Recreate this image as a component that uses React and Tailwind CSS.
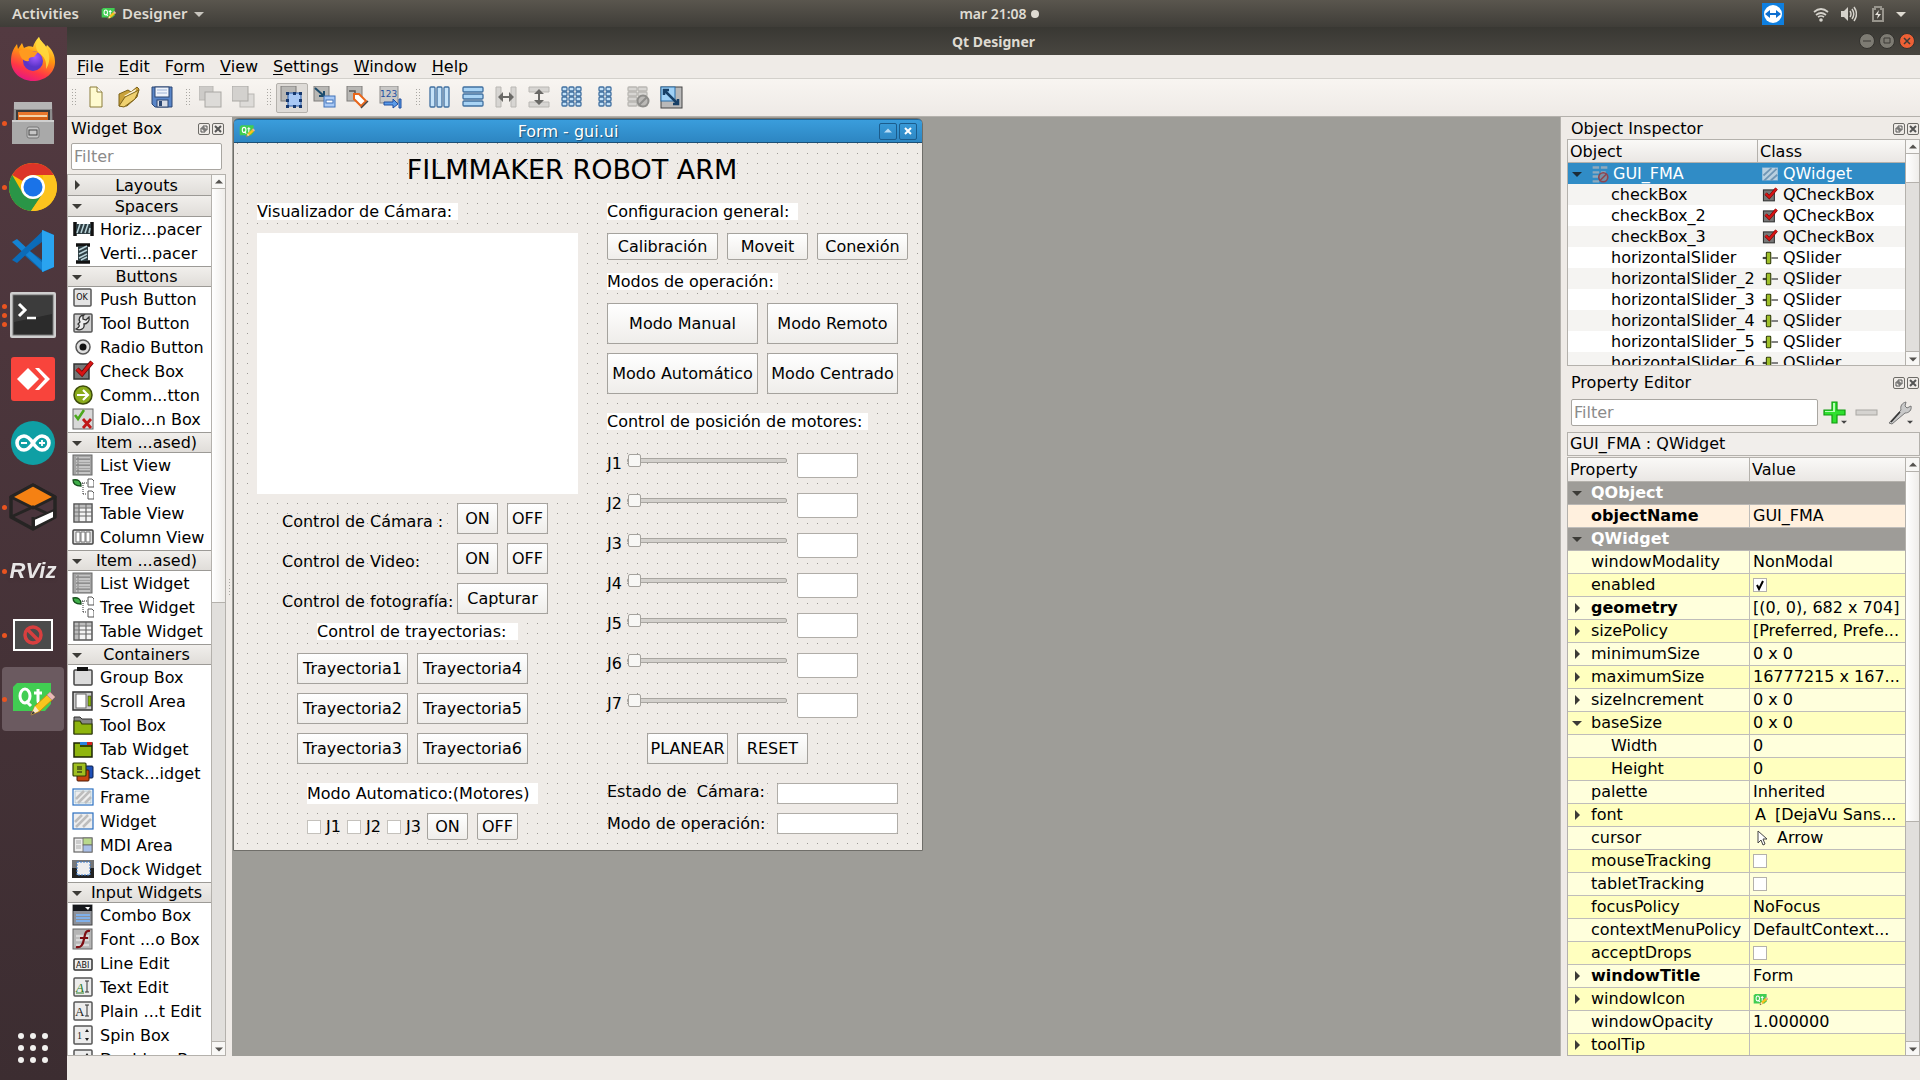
import React from "react";

const UI = 'font-["DejaVu_Sans",sans-serif]';
const SHELL = 'font-["Noto_Sans",sans-serif]';

/* ---------- small drawing helpers ---------- */

function Svg({ s = 22, box = 22, className = "", children }) {
  return (
    <svg width={s} height={s} viewBox={`0 0 ${box} ${box}`} className={`shrink-0 ${className}`} aria-hidden="true">
      {children}
    </svg>
  );
}

function Triangle({ dir = "down", color = "#3c3b37" }) {
  const d = { down: "M0 3h10L5 8z", up: "M0 7h10L5 2z", right: "M3 0v10l5-5z" }[dir];
  return (
    <svg width="10" height="10" viewBox="0 0 10 10" className="shrink-0" aria-hidden="true">
      <path d={d} fill={color} />
    </svg>
  );
}

function QtLogo({ s = 14 }) {
  return (
    <svg width={s} height={s} viewBox="0 0 44 44" className="shrink-0" aria-hidden="true">
      <path d="M6 6h34v21l-6 7H2V10z" fill="#41cd52" />
      <ellipse cx="14" cy="19" rx="5" ry="7" fill="none" stroke="#fff" strokeWidth="3" />
      <path d="M15 24l5 5M27 12v12q0 3 4 2.500M23 16h8" fill="none" stroke="#fff" strokeWidth="3" />
      <path d="M20 38l4-9 14-13 5 5-14 13z" fill="#f9c51d" stroke="#c98d0b" strokeWidth="1" />
      <path d="M36 18l5 5 3-3-5-5z" fill="#e9b7b7" stroke="#b98" />
      <path d="M20 38l4-9 4 5z" fill="#fbe9c9" />
      <path d="M20 38l2-4 2 2z" fill="#333" />
    </svg>
  );
}

/* ---------- dock ---------- */

const Firefox = () => (
  <Svg s={46} box={46}>
    <defs>
      <linearGradient id="ff" x1="0.7" y1="0" x2="0.3" y2="1">
        <stop offset="0" stopColor="#fff44f" />
        <stop offset="0.4" stopColor="#ff980e" />
        <stop offset="0.75" stopColor="#ff3647" />
        <stop offset="1" stopColor="#e31587" />
      </linearGradient>
      <radialGradient id="ffp" cx="0.6" cy="0.3">
        <stop offset="0" stopColor="#a45bff" />
        <stop offset="1" stopColor="#5a35c9" />
      </radialGradient>
    </defs>
    <path d="M29 1c1 4 5 6 7 10l1-2c6 5 8 11 8 17 0 11-10 19-22 19S1 36 1 25c0-7 2-12 6-17l1 5 4-6 2 5c3-2 7-2 9-1 1-4 3-7 6-10z" fill="url(#ff)" />
    <circle cx="23" cy="25" r="10" fill="url(#ffp)" />
    <path d="M9 15c5-3 10-2 13 0l6 1-4 5c-4 0-6 1-5 4-5 1-9-3-10-10z" fill="#ff9a1f" />
    <path d="M29 1c1 4 5 6 7 10 5 8 4 16 0 22 1-8-2-13-7-16-4-4-4-10 0-16z" fill="#ffd83d" opacity="0.9" />
  </Svg>
);
const Files = () => (
  <Svg s={44} box={44}>
    <path d="M3 1h38l1 42H2z" fill="#8d8d8d" />
    <path d="M3 1h38v7H3z" fill="#b5b5b5" />
    <path d="M5 9h34v12H5z" fill="#3a3a3a" />
    <path d="M7 11h30v6H7z" fill="#e9762b" />
    <path d="M8 14h28v5H8z" fill="#f5d3a8" />
    <path d="M7 16h30v4H7z" fill="#d35f16" />
    <path d="M1 19h42v24H1z" fill="#a9a9a9" />
    <path d="M1 19h42v2H1z" fill="#cfcfcf" />
    <rect x="16" y="26" width="12" height="11" rx="2" fill="#c6c6c6" stroke="#777" />
    <rect x="18" y="29" width="8" height="5" fill="none" stroke="#444" />
  </Svg>
);
const Chrome = () => (
  <Svg s={48} box={48}>
    <circle cx="24" cy="24" r="24" fill="#fbbc05" />
    <path d="M24 0A24 24 0 0 1 44.800 12H24A12 12 0 0 0 13.600 18L3.200 12A24 24 0 0 1 24 0z" fill="#dc3428" />
    <path d="M3.200 12A24 24 0 0 0 22 48L34 30A12 12 0 0 1 13.600 30z" fill="#2a9547" />
    <path d="M34 12h10.800A24 24 0 0 1 22 48l12.400-18z" fill="#fcc31e" />
    <circle cx="24" cy="24" r="12" fill="#fff" />
    <circle cx="24" cy="24" r="9.500" fill="#1a73e8" />
  </Svg>
);
const VSCode = () => (
  <Svg s={44} box={44}>
    <path d="M32 1l11 5v32l-11 5-19-17z" fill="#0d68b0" />
    <path d="M1 13l5-3 27 25v8z" fill="#1483d3" />
    <path d="M1 31l5 3 27-25V1z" fill="#0b6bb8" />
    <path d="M31 1l12 5v32l-12 5z" fill="#2aa4f0" />
    <path d="M31 13v18L19 22z" fill="#4b353c" />
  </Svg>
);
const Terminal = () => (
  <Svg s={46} box={46}>
    <rect x="0" y="0" width="46" height="46" rx="2" fill="#cfcfcf" />
    <rect x="3" y="3" width="40" height="40" fill="#2b2b2b" stroke="#777" />
    <path d="M4 4h38v18L4 30z" fill="#444" opacity="0.7" />
    <path d="M9 12l6 6-6 6" stroke="#fff" strokeWidth="3" fill="none" />
    <path d="M17 26h9" stroke="#fff" strokeWidth="2.500" />
  </Svg>
);
const AnyDesk = () => (
  <Svg s={44} box={44}>
    <rect width="44" height="44" rx="3" fill="#f8443c" />
    <path d="M17 11l11 11-11 11L6 22z" fill="#fff" />
    <path d="M24 11h4l11 11-11 11h-4l10-11z" fill="#fff" />
  </Svg>
);
const Arduino = () => (
  <Svg s={44} box={44}>
    <circle cx="22" cy="22" r="22" fill="#0f9fa4" />
    <path d="M22 22c-4-6-7-7-9-7a7 7 0 0 0 0 14c3 0 5-1 9-7s6-7 9-7a7 7 0 0 1 0 14c-3 0-5-1-9-7z" fill="none" stroke="#fff" strokeWidth="3.600" />
    <path d="M10 22h6M28 22h6M31 19v6" stroke="#fff" strokeWidth="1.800" />
  </Svg>
);
const Gazebo = () => (
  <Svg s={48} box={48}>
    <path d="M24 2l22 12v20L24 46 2 34V14z" fill="#4a353c" stroke="#262423" strokeWidth="3.500" strokeLinejoin="round" />
    <path d="M24 2l22 12-22 11L2 14z" fill="#f58113" stroke="#262423" strokeWidth="3" strokeLinejoin="round" />
    <path d="M2 34l22-10 22 10M24 34v12" fill="none" stroke="#262423" strokeWidth="3" />
    <path d="M25 36l20-9v8L25 45z" fill="#fff" stroke="#262423" strokeWidth="2" />
  </Svg>
);
const Blocked = () => (
  <Svg s={42} box={42}>
    <rect x="1" y="5" width="40" height="32" fill="#fff" />
    <rect x="3" y="7" width="36" height="28" fill="#4b4b4b" />
    <circle cx="21" cy="21" r="8" fill="none" stroke="#d83f3f" strokeWidth="3.500" />
    <path d="M15 15l12 12" stroke="#d83f3f" strokeWidth="3.500" />
  </Svg>
);
const RViz = () => (
  <span className='text-[22px] font-bold italic leading-none text-[#e8e6e6] drop-shadow font-["Liberation_Sans",sans-serif]'>RViz</span>
);

const DOCK = [
  ["Firefox", Firefox, 0],
  ["Files", Files, 1],
  ["Chrome", Chrome, 1],
  ["Visual Studio Code", VSCode, 0],
  ["Terminal", Terminal, 3],
  ["AnyDesk", AnyDesk, 0],
  ["Arduino", Arduino, 0],
  ["Gazebo", Gazebo, 1],
  ["RViz", RViz, 1],
  ["Unknown window", Blocked, 1],
  ["Qt Designer", () => <QtLogo s={44} />, 1],
];

function Dock() {
  return (
    <nav className="flex w-[67px] shrink-0 flex-col bg-linear-to-b from-[#533a41] to-[#3c2d31]" aria-label="Dock">
      {DOCK.map(([name, Icon, dots], i) => (
        <button
          key={name}
          aria-label={name}
          className={`relative mx-[2px] flex h-16 w-[62px] items-center justify-center rounded ${i === 10 ? "bg-[#6b5a60]" : ""}`}
        >
          <span className="absolute left-0 flex flex-col gap-1">
            {Array.from({ length: dots }, (_, k) => (
              <span key={k} className="size-[5px] rounded-full bg-[#e95420]" />
            ))}
          </span>
          <Icon />
        </button>
      ))}
      <button aria-label="Show applications" className="mt-auto mr-[2px] mb-4 flex justify-center">
        <Svg s={32} box={32}>
          {[4, 16, 28].map((y) => [4, 16, 28].map((x) => <circle key={`${x}-${y}`} cx={x} cy={y} r="3" fill="#f2f1ef" />))}
        </Svg>
      </button>
    </nav>
  );
}

/* ---------- shell bars ---------- */

function TopBar() {
  return (
    <header className={`grid h-[27px] shrink-0 grid-cols-[1fr_auto_1fr] items-center bg-linear-to-b from-[#5a564e] to-[#3f3d38] pr-[14px] pl-3 text-[14px] font-semibold text-[#dfdbd2] ${SHELL}`}>
      <div className="flex items-center text-[15px]">
        <button>Activities</button>
        <button className="ml-[22px] flex items-center gap-[6px]">
          <QtLogo s={15} />
          Designer
          <Triangle color="#c8c5be" />
        </button>
      </div>
      <div className="ml-20 flex items-center gap-1">
        mar 21:08
        <span className="size-2 rounded-full bg-[#dfdbd2]" />
      </div>
      <div className="flex items-center justify-end">
        <Svg s={22}>
          <rect width="22" height="22" fill="#0e7fe0" />
          <circle cx="11" cy="11" r="9" fill="#fff" />
          <path d="M3 11l5-4v3h6V7l5 4-5 4v-3H8v3z" fill="#0e6fd0" />
        </Svg>
        <Svg s={16} box={16} className="ml-[29px]">
          <path d="M1 6q7-6 14 0M3 9q5-4 10 0M5 11q3-2 6 0" fill="none" stroke="#d5d2cb" strokeWidth="1.700" />
          <circle cx="8" cy="14" r="1.800" fill="#d5d2cb" />
        </Svg>
        <Svg s={16} box={16} className="ml-3">
          <path d="M0 5h3l4-4v14l-4-4H0z" fill="#d5d2cb" />
          <path d="M9 5q2 3 0 6M11 3q3.500 5 0 10M13 1q5 7 0 14" fill="none" stroke="#d5d2cb" strokeWidth="1.500" />
        </Svg>
        <Svg s={18} box={18} className="ml-3">
          <path d="M4 4h2V2h6v2h2v12H4z" fill="none" stroke="#98958d" strokeWidth="2" />
          <path d="M10 5l-4 5h3l-1 4 4-5H9z" fill="#e5e2db" />
        </Svg>
        <span className="ml-[9px] flex"><Triangle color="#dfdbd2" /></span>
      </div>
    </header>
  );
}

function TitleBar() {
  const base = "flex size-4 items-center justify-center rounded-full border border-[#33322e]";
  return (
    <div className={`grid h-7 shrink-0 grid-cols-[1fr_auto_1fr] items-center bg-linear-to-b from-[#393833] to-[#484640] text-[14px] font-bold text-[#dfdbd2] ${SHELL}`}>
      <span />
      <h1>Qt Designer</h1>
      <div className="flex justify-end gap-1 pr-[5px]">
        <button aria-label="Minimize" className={`${base} bg-[#7d7b73]`}>
          <Svg s={8} box={8}><path d="M0 4h8" stroke="#3c3b37" /></Svg>
        </button>
        <button aria-label="Maximize" className={`${base} bg-[#7d7b73]`}>
          <Svg s={8} box={8}><path d="M1 1h6v5H1z" fill="none" stroke="#3c3b37" /></Svg>
        </button>
        <button aria-label="Close" className={`${base} bg-[#ee6035]`}>
          <Svg s={8} box={8}><path d="M1 1l6 6M7 1L1 7" stroke="#3c3b37" strokeWidth="1.500" /></Svg>
        </button>
      </div>
    </div>
  );
}

function MenuBar() {
  return (
    <nav className="flex h-6 shrink-0 items-center gap-px border-b border-[#d3d0cb] bg-[#efebe7] pl-[3px]" aria-label="Menu">
      {["File", "Edit", "Form", "View", "Settings", "Window", "Help"].map((m) => {
        const at = m === "Form" ? 1 : 0;
        return (
          <button key={m} className="px-[7px]">
            {m.slice(0, at)}
            <span className="underline underline-offset-2">{m[at]}</span>
            {m.slice(at + 1)}
          </button>
        );
      })}
    </nav>
  );
}

/* ---------- toolbar ---------- */

const gray = "#b9b7b3";
const Plate = () => <rect x="1" y="0" width="15" height="15" fill="#b8b7b4" stroke="#7e7d7a" />;
const cells = (cols, rows, w, h, x0, gx, gy, fill, stroke) =>
  Array.from({ length: cols * rows }, (_, i) => (
    <rect key={i} x={x0 + (i % cols) * gx} y={1 + Math.floor(i / cols) * gy} width={w} height={h} rx="1" fill={fill} stroke={stroke} strokeWidth="1.300" />
  ));

const TOOLS = [
  [
    ["New", <><path d="M5 1h7l5 5v15H5z" fill="#fffbd0" stroke="#8b7d3a" /><path d="M12 1v5h5" fill="#fff" stroke="#8b7d3a" /></>],
    ["Open", <><path d="M1 20V8l9-4 3 2 6-5 2 2-2 8-10 9z" fill="#c9a23b" stroke="#7d6219" /><path d="M6 10l12-7-2 9z" fill="#fff8dd" /><path d="M1 20l6-9 14-7-4 9-11 8z" fill="#efd170" stroke="#7d6219" /></>],
    ["Save", <><path d="M1 1h20v20H4l-3-3z" fill="#5a86c8" stroke="#2c4773" /><rect x="4" y="1" width="14" height="10" fill="#eef3fb" stroke="#2c4773" /><path d="M6 4h10M6 7h10" stroke="#9fb4d6" /><rect x="6" y="14" width="11" height="7" fill="#d9dde6" stroke="#2c4773" /><rect x="8" y="15" width="3" height="5" fill="#2c4773" /></>],
  ],
  [
    ["Send to Back", <><rect x="0" y="0" width="14" height="14" fill="#cdcbc8" stroke={gray} /><rect x="6" y="6" width="16" height="15" fill="#dddbd8" stroke="#a9a7a3" /></>],
    ["Bring to Front", <><rect x="8" y="8" width="14" height="13" fill="#dddbd8" stroke={gray} /><rect x="0" y="0" width="16" height="15" fill="#d3d1ce" stroke="#a9a7a3" /></>],
  ],
  [
    ["Edit Widgets", <><Plate /><path d="M8 7h13v13H8z" fill="#a9c9f5" stroke="#2a5ca8" />{[7, 14, 20].map((x) => [6, 13, 19].map((y) => (x === 14 && y === 13 ? null : <rect key={`${x}${y}`} x={x - 1} y={y} width="3" height="3" fill="#16386e" />)))}</>],
    ["Edit Signals/Slots", <><Plate /><path d="M2 2l9 8M11 5v5H6" stroke="#1d4b6b" strokeWidth="2" fill="none" /><rect x="11" y="10" width="11" height="11" fill="#a9c9f5" stroke="#3e70b8" /><rect x="13" y="14" width="7" height="3" fill="#fff" stroke="#3e70b8" /></>],
    ["Edit Buddies", <><Plate /><path d="M3 5h6v4" stroke="#555" fill="none" strokeWidth="1.500" /><path d="M8 8h5l7 7-5 5-7-7z" fill="#fff" stroke="#e8661b" strokeWidth="2" /><path d="M22 15l-7 7" stroke="#444" strokeWidth="1.500" /></>],
    ["Edit Tab Order", <><rect x="1" y="0" width="18" height="17" fill="#c9c8c6" stroke="#8d8c8a" /><text x="1" y="11" fontSize="9" fill="#1f4fa0" fontFamily="DejaVu Sans">123</text><path d="M5 16h9v-3l5 5-5 4v-3H5zM20 13h2v9h-2z" fill="#5b9be8" stroke="#1f4fa0" /></>],
  ],
  [
    ["Lay Out Horizontally", cells(3, 1, 5, 20, 1, 7, 0, "#c5e2f8", "#3f6f9f")],
    ["Lay Out Vertically", cells(1, 3, 20, 5, 1, 0, 7, "#a9d4f5", "#3f6f9f")],
    ["Splitter Horizontal", <><path d="M1 1h5v20H1zM16 1h5v20h-5z" fill="#d7d5d2" stroke={gray} /><path d="M3 11l5-5v4h6V6l5 5-5 5v-4H8v4z" fill="#6a6966" /></>],
    ["Splitter Vertical", <><path d="M1 1h20v5H1zM1 16h20v5H1z" fill="#d7d5d2" stroke={gray} /><path d="M11 3l5 5h-4v6h4l-5 5-5-5h4V8H6z" fill="#6a6966" /></>],
    ["Grid Layout", cells(3, 4, 5, 4, 1, 7, 5, "#c5e2f8", "#3f6f9f")],
    ["Form Layout", cells(2, 4, 5, 4, 5, 7, 5, "#c5e2f8", "#3f6f9f")],
    ["Break Layout", <>{cells(2, 4, 9, 4, 1, 10, 5, "#d7d5d2", gray)}<circle cx="16" cy="15" r="5.500" fill="#bbb9b6" stroke="#8e8d8a" strokeWidth="2" /><path d="M12 19l8-8" stroke="#8e8d8a" strokeWidth="2" /></>],
    ["Adjust Size", <><rect x="1" y="1" width="21" height="21" fill="#b9b9b9" stroke="#444" /><rect x="1" y="1" width="14" height="14" fill="#9fd0f5" stroke="#2a6fa8" /><path d="M4 4l14 14M4 9V4h5M18 13v5h-5" stroke="#173f66" strokeWidth="2.500" fill="none" /></>],
  ],
];
const TOOL_GAPS = ["mr-[2px]", "mr-[2px]", "mr-1", ""];

function Grip() {
  return <span className="mx-[5px] h-[18px] w-1 shrink-0 bg-[radial-gradient(circle_at_0_0,#a9a7a2_1px,transparent_1px)] bg-[size:3px_3px]" />;
}

function ToolBar() {
  return (
    <div className="flex h-[38px] shrink-0 items-center border-b border-[#b4b1ac] bg-linear-to-b from-[#f8f5f1] to-[#eeeae6] pt-px" role="toolbar">
      {TOOLS.map((group, g) => (
        <React.Fragment key={g}>
          <Grip />
          <div className={`flex gap-px ${TOOL_GAPS[g]}`}>
            {group.map(([name, art], i) => (
              <button
                key={name}
                aria-label={name}
                className={`flex h-[30px] w-8 items-center justify-center rounded-xs border ${g === 2 && i === 0 ? "border-[#b4b1ac] bg-[#dedbd7]" : "border-transparent"}`}
              >
                <Svg s={24} box={24}>{art}</Svg>
              </button>
            ))}
          </div>
        </React.Fragment>
      ))}
    </div>
  );
}

/* ---------- dock panels ---------- */

function PanelTitle({ children }) {
  const b = "flex size-3 items-center justify-center rounded-xs border border-[#6d6b67]";
  return (
    <div className="flex h-[21px] items-center gap-[2px] pr-px pl-1">
      <h2 className="mr-auto">{children}</h2>
      <button aria-label="Float" className={b}>
        <Svg s={8} box={8}><path d="M3 1h4v4H3zM1 3h4v4H1z" fill="#efebe7" stroke="#555" /></Svg>
      </button>
      <button aria-label="Close" className={b}>
        <Svg s={8} box={8}><path d="M1 1l6 6M7 1L1 7" stroke="#555" strokeWidth="2" /></Svg>
      </button>
    </div>
  );
}

function ScrollBar({ thumb }) {
  return (
    <div className="flex w-[14px] shrink-0 flex-col border-l border-[#b4b1ac] bg-[#e1dfdc]">
      <button aria-label="Scroll up" className="flex h-[14px] shrink-0 items-center justify-center border-b border-[#b4b1ac] bg-[#f8f7f5]">
        <svg width="8" height="8" viewBox="0 0 10 10" aria-hidden="true"><path d="M0 7h10L5 2z" fill="#55534f" /></svg>
      </button>
      <div className={`${thumb} shrink-0 border-b border-[#b4b1ac] bg-linear-to-r from-white to-[#efedea]`} />
      <button aria-label="Scroll down" className="mt-auto flex h-[14px] shrink-0 items-center justify-center border-t border-[#b4b1ac] bg-[#f8f7f5]">
        <svg width="8" height="8" viewBox="0 0 10 10" aria-hidden="true"><path d="M0 3h10L5 8z" fill="#55534f" /></svg>
      </button>
    </div>
  );
}

/* widget glyphs */
const dk = "#333";
const Box = ({ fill = "#d9d9d9", children }) => (
  <>
    <rect x="2" y="2" width="18" height="18" rx="1" fill={fill} stroke="#555" strokeWidth="1.500" />
    {children}
  </>
);
const listArt = <><rect x="1" y="1" width="19" height="20" fill="#a3a3a3" stroke="#666" /><path d="M4 4h1M7 4h11M4 7h1M7 7h11M4 10h1M7 10h11M4 13h1M7 13h11M4 16h1M7 16h11M4 19h1M7 19h11" stroke="#e6e6e6" /><path d="M4 5h14M4 11h14M4 17h14" stroke="#6c6c6c" strokeWidth="0.800" /></>;
const treeArt = <><path d="M1 2c5-1 8 1 8 6-5 0-8-2-8-6z" fill="#3fae49" stroke="#17501d" strokeWidth="1.300" /><path d="M10 5h5M11 5v11M11 16h4" stroke={dk} strokeDasharray="1 1" /><path d="M16 1h4l2 2v6h-6zM16 13h4l2 2v6h-6z" fill="#fff" stroke="#555" /></>;
const tableArt = <><rect x="2" y="2" width="18" height="18" fill="#f3f3f3" stroke="#555" strokeWidth="1.500" /><path d="M2 6h18M2 10h18M2 14h18M7 2v18M14 2v18" stroke="#666" strokeWidth="1.200" /><path d="M3 3h16v3H3zM3 3h4v16H3z" fill="#888" opacity="0.5" /></>;
const checkArt = <><rect x="2" y="4" width="15" height="15" fill="#777" stroke="#333" strokeWidth="1.500" /><path d="M5 9l5 5L20 2" stroke="#6b0505" strokeWidth="4.500" fill="none" /><path d="M5 9l5 5L20 2" stroke="#d81414" strokeWidth="3" fill="none" /></>;
const frameArt = <><rect x="1" y="3" width="20" height="16" fill="#fff" stroke="#2a6fc0" strokeWidth="1.200" /><rect x="3" y="5" width="16" height="12" fill="#eee" stroke="#8ab" strokeWidth="0.600" /><path d="M4 13l8-8M6 17L18 5M13 17l6-6" stroke="#bdbdbd" strokeWidth="2.500" /></>;
const widgetArt = <><rect x="1" y="3" width="20" height="16" fill="#eee" stroke="#2a6fc0" strokeWidth="1.200" /><path d="M3 12l7-7M4 17L16 5M11 17l8-8" stroke="#bdbdbd" strokeWidth="2.500" /></>;

const SECTIONS = [
  { name: "Layouts", open: false, items: [] },
  {
    name: "Spacers",
    items: [
      ["Horiz...pacer", <><path d="M3 4v14M20 4v14" stroke="#111" strokeWidth="3.500" /><rect x="4" y="6" width="15" height="10" fill="#2d3d42" /><path d="M5 15l3-9M9 15l3-9M13 15l3-9M17 15l1-5" stroke="#b9d3d9" strokeWidth="1.500" /></>],
      ["Verti...pacer", <><path d="M4 3h14M4 20h14" stroke="#111" strokeWidth="3.500" /><rect x="6" y="4" width="10" height="15" fill="#2d3d42" /><path d="M7 8l8-4M7 12l8-4M7 16l8-4M9 18l6-3" stroke="#b9d3d9" strokeWidth="1.500" /></>],
    ],
  },
  {
    name: "Buttons",
    items: [
      ["Push Button", <><rect x="2" y="1" width="17" height="17" rx="1" fill="#e4e4e4" stroke="#555" strokeWidth="1.500" /><text x="10" y="12" textAnchor="middle" fontSize="8" fill="#111" fontFamily="DejaVu Sans">OK</text></>],
      ["Tool Button", <Box fill="#cfcfcf"><path d="M4 17c4 2 9 0 8-5 3 0 6-3 5-7l-3 3-3-1V4l1-1c-4 0-6 4-4 7l-2 2c2 1 2 3-2 5z" fill="#eee" stroke="#333" strokeWidth="1.300" /></Box>],
      ["Radio Button", <><circle cx="11" cy="11" r="7" fill="#ddd" stroke="#555" strokeWidth="1.500" /><circle cx="11" cy="11" r="3.500" fill="#111" /></>],
      ["Check Box", checkArt],
      ["Comm...tton", <><circle cx="11" cy="11" r="9" fill="#8aab1c" stroke="#3e4d0b" strokeWidth="1.500" /><path d="M5 11h10M11 6l5 5-5 5" stroke="#fff" strokeWidth="2.200" fill="none" /></>],
      ["Dialo...n Box", <><rect x="1" y="1" width="20" height="20" fill="#d8d8d8" stroke="#666" /><path d="M3 7l3 4 6-9" stroke="#4ba81c" strokeWidth="2.500" fill="none" /><path d="M11 11l8 9M19 11l-8 9" stroke="#c01818" strokeWidth="2.800" /></>],
    ],
  },
  {
    name: "Item ...ased)",
    items: [
      ["List View", listArt],
      ["Tree View", treeArt],
      ["Table View", tableArt],
      ["Column View", <><rect x="1" y="4" width="20" height="14" rx="1" fill="#ddd" stroke="#444" strokeWidth="1.500" /><path d="M4 6h4v10H4zM9 6h4v10H9zM14 6h4v10h-4z" fill="#fff" stroke="#777" /></>],
    ],
  },
  { name: "Item ...ased)", items: [["List Widget", listArt], ["Tree Widget", treeArt], ["Table Widget", tableArt]] },
  {
    name: "Containers",
    items: [
      ["Group Box", <><rect x="2" y="4" width="18" height="15" rx="1" fill="#dcdcdc" stroke="#444" strokeWidth="1.500" /><rect x="5" y="1" width="11" height="4" fill="#111" /></>],
      ["Scroll Area", <><rect x="1" y="2" width="19" height="18" fill="#ccc" stroke="#333" strokeWidth="1.500" /><rect x="4" y="4" width="10" height="14" fill="#fff" stroke="#666" /><rect x="16" y="6" width="3" height="10" fill="#86b300" stroke="#333" strokeWidth="0.600" /></>],
      ["Tool Box", <><path d="M2 3h6l2 2h10v15H2z" fill="#888" stroke="#333" /><path d="M2 7h6l2 3h10v10H2z" fill="#8fb50e" stroke="#2f3d05" strokeWidth="1.200" /></>],
      ["Tab Widget", <><path d="M2 5h18v14H2z" fill="#8fb50e" stroke="#1d2403" strokeWidth="1.500" /><path d="M8 4h7v3H8z" fill="#2a83e0" /><path d="M15 4h5v3h-5z" fill="#d11f1f" /><path d="M8 8h12" stroke="#1d2403" strokeWidth="1.500" /></>],
      ["Stack...idget", <><rect x="9" y="4" width="12" height="12" rx="1" fill="#1d4fb8" stroke="#0b1f4a" /><rect x="5" y="8" width="12" height="11" rx="1" fill="#c8440f" stroke="#4a1804" /><rect x="1" y="1" width="13" height="13" rx="1" fill="#a0c020" stroke="#2f3d05" strokeWidth="1.200" /><path d="M5 5h5M5 7h5M5 10h5" stroke="#111" /></>],
      ["Frame", frameArt],
      ["Widget", widgetArt],
      ["MDI Area", <><rect x="2" y="4" width="18" height="14" fill="#eee" stroke="#666" strokeWidth="1.200" /><rect x="11" y="4" width="9" height="7" fill="#b9d98c" stroke="#666" strokeWidth="0.800" /><rect x="11" y="11" width="9" height="7" fill="#a9bfe8" stroke="#666" strokeWidth="0.800" /><path d="M4 7h5M4 9h5M4 12h5M4 14h5" stroke="#aaa" /></>],
      ["Dock Widget", <><rect x="0" y="2" width="22" height="18" fill="#222" /><rect x="0" y="2" width="22" height="8" fill="#777" /><rect x="5" y="4" width="13" height="13" fill="#eee" stroke="#3b7dd0" strokeDasharray="2 1" /></>],
    ],
  },
  {
    name: "Input Widgets",
    items: [
      ["Combo Box", <><rect x="1" y="1" width="19" height="20" fill="#8d9199" stroke="#444" /><rect x="1" y="1" width="19" height="6" fill="#16181c" /><path d="M13 3h5l-2 3z" fill="#fff" /><path d="M4 11h14M4 14h14M4 17h14" stroke="#7fb0ea" strokeWidth="2" /></>],
      ["Font ...o Box", <><rect x="1" y="1" width="19" height="20" fill="#b5b5b5" stroke="#666" /><path d="M4 8h13M4 12h13M4 17h13" stroke="#d8d8d8" strokeWidth="2.500" /><path d="M18 3c-4-1-5 2-6 8s-3 9-8 8M8 10h8" stroke="#7e0d12" strokeWidth="2.200" fill="none" /></>],
      ["Line Edit", <><rect x="2" y="7" width="18" height="11" rx="1" fill="#eee" stroke="#333" strokeWidth="1.500" /><text x="4" y="16" fontSize="8" fill="#111" fontFamily="DejaVu Sans">ABI</text></>],
      ["Text Edit", <Box fill="#ececec"><text x="4" y="16" fontSize="13" fontStyle="italic" fill="#2a7a25" fontFamily="Liberation Serif">A</text><path d="M4 17h8" stroke="#2a7a25" /><path d="M13 5h4M15 5v11M13 16h4" stroke="#333" /></Box>],
      ["Plain ...t Edit", <Box fill="#ececec"><text x="3" y="16" fontSize="13" fill="#222" fontFamily="Liberation Serif">A</text><path d="M13 5h4M15 5v11M13 16h4" stroke="#333" /></Box>],
      ["Spin Box", <Box fill="#ececec"><text x="5" y="15" fontSize="10" fill="#222" fontFamily="Liberation Serif">1</text><path d="M13 8l2-3 2 3zM13 14l2 3 2-3z" fill="#222" /></Box>],
      ["Doubl...n Box", <Box fill="#ececec"><path d="M13 8l2-3 2 3zM13 14l2 3 2-3z" fill="#222" /></Box>],
    ],
  },
];

function WidgetBox() {
  return (
    <aside className="flex w-[159px] shrink-0 flex-col">
      <div className="pt-px pr-px"><PanelTitle>Widget Box</PanelTitle></div>
      <input aria-label="Filter widgets" placeholder="Filter" className="mt-1 mr-1 ml-1 h-[27px] rounded-xs border border-[#a9a6a1] bg-white px-[2px] placeholder:text-[#8b8b8b]" />
      <div className="mt-1 flex min-h-0 flex-1 border border-[#b4b1ac] bg-white">
        <div className="min-w-0 flex-1 overflow-hidden">
          {SECTIONS.map((s, i) => (
            <section key={i} className={s.open === false ? "" : "pb-px"}>
              <button className={`flex h-[21px] w-full items-center border-b border-[#9c9a96] bg-linear-to-b from-[#f1efec] to-[#e0ddd9] pl-1 ${i < 2 ? "" : "border-t"}`}>
                <Triangle dir={s.open === false ? "right" : "down"} />
                <span className="flex-1 text-center leading-[19px]">{s.name}</span>
              </button>
              <ul>
                {s.items.map(([name, art]) => (
                  <li key={name} className="flex h-6 items-center gap-[6px] pl-1 whitespace-nowrap">
                    <Svg>{art}</Svg>
                    {name}
                  </li>
                ))}
              </ul>
            </section>
          ))}
        </div>
        <ScrollBar thumb="h-[414px]" />
      </div>
    </aside>
  );
}

/* ---------- edited form ---------- */

function Btn({ className = "", children }) {
  return (
    <button className={`rounded-xs border border-[#a5a29d] bg-linear-to-b from-white to-[#efedea] text-center whitespace-nowrap ${className}`}>
      {children}
    </button>
  );
}
function Tag({ className = "", children }) {
  return <h3 className={`h-[17px] bg-white leading-[17px] whitespace-nowrap ${className}`}>{children}</h3>;
}
const FIELD = "rounded-xs border border-[#b0ada8] bg-white px-1";

function FormWindow() {
  return (
    <div className="w-[690px] rounded-t-md border border-[#6f6e69] bg-[#efebe7]">
      <div className="grid h-6 grid-cols-[1fr_auto_1fr] items-center rounded-t border-t border-b border-t-[#1f6699] border-b-[#1b4f75] bg-linear-to-b from-[#3a9ddc] to-[#2d86c2] pr-[5px] pl-[5px]">
        <span className="flex"><QtLogo s={16} /></span>
        <span className="pr-[20px] text-white [text-shadow:1px_1px_1px_#1b4f75]">Form - gui.ui</span>
        <div className="flex justify-end gap-[2px]">
          <button aria-label="Shade" className="flex h-[17px] w-[18px] items-center justify-center rounded-xs border border-[#1b5c8c]"><Svg s={8} box={10}><path d="M0 7h10L5 2z" fill="#b9dcf5" /></Svg></button>
          <button aria-label="Close form" className="flex h-[17px] w-[18px] items-center justify-center rounded-xs border border-[#1b5c8c]"><Svg s={8} box={8}><path d="M1 1l6 6M7 1L1 7" stroke="#fff" strokeWidth="2" /></Svg></button>
        </div>
      </div>
      <div className="px-[3px] pb-[2px]">
        <div className="bg-[radial-gradient(circle_at_0_0,#9b9994_1px,transparent_1px)] bg-[size:10px_10px] pb-2">
          <h2 className="pt-[11px] pr-3 text-center text-[27px] leading-8">FILMMAKER ROBOT ARM</h2>
          <div className="mt-[17px] grid grid-cols-[350px_1fr] pl-5">
            {/* left column */}
            <div>
              <Tag className="w-[201px]">Visualizador de Cámara:</Tag>
              <div className="mt-[13px] h-[261px] w-[321px] bg-white" />
              <div className="mt-[9px] ml-[25px] grid grid-cols-[175px_auto_1fr] items-center gap-y-[9px]">
                <span className="pt-[5px]">Control de Cámara :</span>
                <Btn className="h-[31px] w-[41px]">ON</Btn>
                <Btn className="ml-[9px] h-[31px] w-[41px]">OFF</Btn>
                <span className="pt-[5px]">Control de Video:</span>
                <Btn className="h-[31px] w-[41px]">ON</Btn>
                <Btn className="ml-[9px] h-[31px] w-[41px]">OFF</Btn>
                <span className="pt-[5px] whitespace-nowrap">Control de fotografía:</span>
                <Btn className="col-span-2 h-[31px] w-[91px]">Capturar</Btn>
              </div>
              <Tag className="mt-[9px] ml-[60px] w-[201px]">Control de trayectorias:</Tag>
              <div className="mt-[13px] ml-10 grid grid-cols-[111px_111px] gap-[9px]">
                {[1, 4, 2, 5, 3, 6].map((n) => (
                  <Btn key={n} className="h-[31px]">Trayectoria{n}</Btn>
                ))}
              </div>
              <h3 className="mt-[19px] ml-[50px] h-[21px] w-[231px] bg-white leading-[21px]">Modo Automatico:(Motores)</h3>
              <div className="mt-[9px] ml-[50px] flex items-center">
                {["J1", "J2", "J3"].map((j) => (
                  <label key={j} className="flex w-10 items-center gap-[5px]">
                    <input type="checkbox" className="size-[14px] shrink-0 appearance-none border border-[#c4c1bc] bg-white" />
                    {j}
                  </label>
                ))}
                <Btn className="h-[27px] w-[41px]">ON</Btn>
                <Btn className="ml-[9px] h-[27px] w-[41px]">OFF</Btn>
              </div>
            </div>
            {/* right column */}
            <div>
              <Tag className="w-[191px]">Configuracion general:</Tag>
              <div className="mt-[13px] flex gap-[9px]">
                <Btn className="h-[27px] w-[111px]">Calibración</Btn>
                <Btn className="h-[27px] w-[81px]">Moveit</Btn>
                <Btn className="h-[27px] w-[91px]">Conexión</Btn>
              </div>
              <Tag className="mt-[13px] w-[171px]">Modos de operación:</Tag>
              <div className="mt-[13px] grid grid-cols-[151px_131px] gap-[9px]">
                <Btn className="h-[41px]">Modo Manual</Btn>
                <Btn className="h-[41px]">Modo Remoto</Btn>
                <Btn className="h-[41px]">Modo Automático</Btn>
                <Btn className="h-[41px]">Modo Centrado</Btn>
              </div>
              <Tag className="mt-[19px] w-[261px]">Control de posición de motores:</Tag>
              <div className="mt-[23px] flex flex-col gap-[15px]">
                {["J1", "J2", "J3", "J4", "J5", "J6", "J7"].map((j) => (
                  <div key={j} className="flex">
                    <label htmlFor={`slider-${j}`} className="w-[20px] leading-[21px]">{j}</label>
                    <input
                      id={`slider-${j}`}
                      type="range"
                      defaultValue="0"
                      className="h-[14px] w-[160px] appearance-none bg-transparent [&::-webkit-slider-runnable-track]:h-[5px] [&::-webkit-slider-runnable-track]:rounded-xs [&::-webkit-slider-runnable-track]:border [&::-webkit-slider-runnable-track]:border-[#a9a6a1] [&::-webkit-slider-runnable-track]:bg-[#d2cfcb] [&::-webkit-slider-thumb]:-mt-[5px] [&::-webkit-slider-thumb]:h-[13px] [&::-webkit-slider-thumb]:w-[13px] [&::-webkit-slider-thumb]:appearance-none [&::-webkit-slider-thumb]:rounded-xs [&::-webkit-slider-thumb]:border [&::-webkit-slider-thumb]:border-[#a5a29d] [&::-webkit-slider-thumb]:bg-[#f8f7f5]"
                    />
                    <input aria-label={`${j} value`} className={`ml-[10px] h-[25px] w-[61px] ${FIELD}`} />
                  </div>
                ))}
              </div>
              <div className="mt-[15px] ml-10 flex gap-[9px]">
                <Btn className="h-[31px] w-[81px]">PLANEAR</Btn>
                <Btn className="h-[31px] w-[71px]">RESET</Btn>
              </div>
              <div className="mt-[19px] grid grid-cols-[170px_121px] gap-y-[9px]">
                <label htmlFor="estado" className="leading-[17px] whitespace-pre">Estado de  Cámara:</label>
                <input id="estado" className={`h-[21px] ${FIELD}`} />
                <label htmlFor="modo" className="leading-[21px]">Modo de operación:</label>
                <input id="modo" className={`h-[21px] ${FIELD}`} />
              </div>
            </div>
          </div>
        </div>
      </div>
    </div>
  );
}

/* ---------- right panels ---------- */

const sliderArt = <><path d="M1 11h6" stroke="#444" strokeWidth="3" /><path d="M13 11h9" stroke="#777" strokeWidth="2.500" /><rect x="6" y="3" width="6" height="16" rx="1" fill="#9fc02a" stroke="#333f0a" strokeWidth="1.500" /></>;

const OBJECTS = [
  ["checkBox", "QCheckBox"],
  ["checkBox_2", "QCheckBox"],
  ["checkBox_3", "QCheckBox"],
  ["horizontalSlider", "QSlider"],
  ["horizontalSlider_2", "QSlider"],
  ["horizontalSlider_3", "QSlider"],
  ["horizontalSlider_4", "QSlider"],
  ["horizontalSlider_5", "QSlider"],
  ["horizontalSlider_6", "QSlider"],
];

const HEAD = "border-b border-[#b4b1ac] bg-linear-to-b from-[#faf9f7] to-[#eae7e4] p-0 pl-[2px] text-left font-normal";

function ObjectInspector() {
  return (
    <section>
      <PanelTitle>Object Inspector</PanelTitle>
      <div className="flex h-[227px] border border-[#b4b1ac] bg-white">
        <div className="min-w-0 flex-1 overflow-hidden">
          <table className="w-full table-fixed border-separate border-spacing-0 whitespace-nowrap">
            <thead>
              <tr className="h-[23px]">
                <th className={`${HEAD} w-[190px] border-r`}>Object</th>
                <th className={HEAD}>Class</th>
              </tr>
            </thead>
            <tbody>
              <tr className="h-[21px] bg-[#308cc6] text-white">
                <td className="p-0 pl-1 leading-[21px]">
                  <span className="flex items-center">
                    <Triangle color="#1c2b36" />
                    <Svg s={18} className="mr-1 ml-[9px]">
                      <path d="M2 3h8M12 3h8M2 9h8M2 14h8M2 20h8M12 9h6" stroke="#8fa9bd" strokeWidth="3" />
                      <circle cx="15" cy="15" r="5.500" fill="#7690a5" stroke="#8d4550" strokeWidth="2" />
                      <path d="M11 19l8-8" stroke="#8d4550" strokeWidth="2" />
                    </Svg>
                    GUI_FMA
                  </span>
                </td>
                <td className="p-0 pl-1 leading-[21px]">
                  <span className="flex items-center gap-[5px]">
                    <Svg s={16}><rect x="0" y="2" width="22" height="18" fill="#b9d0e0" stroke="#5f9fd0" /><path d="M2 13L13 3M3 20L20 4M12 20l9-8" stroke="#6f96b5" strokeWidth="2.500" /></Svg>
                    QWidget
                  </span>
                </td>
              </tr>
              {OBJECTS.map(([o, c]) => (
                <tr key={o} className="h-[21px] odd:bg-white even:bg-[#f5f4f2]">
                  <td className="p-0 pl-[43px] leading-[21px]">{o}</td>
                  <td className="p-0 pl-1 leading-[21px]">
                    <span className="flex items-center gap-[5px]">
                      <Svg s={16}>{c === "QSlider" ? sliderArt : checkArt}</Svg>
                      {c}
                    </span>
                  </td>
                </tr>
              ))}
            </tbody>
          </table>
        </div>
        <ScrollBar thumb="h-[29px]" />
      </div>
    </section>
  );
}

const cb = (on) => ({ check: true, on });
const PROPS = [
  ["QObject", null],
  ["objectName", "GUI_FMA", "b"],
  ["QWidget", null],
  ["windowModality", "NonModal"],
  ["enabled", cb(true)],
  ["geometry", "[(0, 0), 682 x 704]", "b+"],
  ["sizePolicy", "[Preferred, Prefe...", "+"],
  ["minimumSize", "0 x 0", "+"],
  ["maximumSize", "16777215 x 167...", "+"],
  ["sizeIncrement", "0 x 0", "+"],
  ["baseSize", "0 x 0", "-"],
  ["Width", "0", "i"],
  ["Height", "0", "i"],
  ["palette", "Inherited"],
  ["font", "[DejaVu Sans...", "+"],
  ["cursor", "Arrow"],
  ["mouseTracking", cb(false)],
  ["tabletTracking", cb(false)],
  ["focusPolicy", "NoFocus"],
  ["contextMenuPolicy", "DefaultContext..."],
  ["acceptDrops", cb(false)],
  ["windowTitle", "Form", "b+"],
  ["windowIcon", "qt", "+"],
  ["windowOpacity", "1.000000"],
  ["toolTip", "", "+"],
];

function Value({ name, value }) {
  if (value.check)
    return (
      <span className="flex h-[22px] items-center">
        <span className="grid">
          <input type="checkbox" aria-label={name} defaultChecked={value.on} className="peer col-start-1 row-start-1 size-[14px] appearance-none border border-[#b4b1ac] bg-white" />
          <Svg s={14} box={14} className="pointer-events-none invisible z-10 col-start-1 row-start-1 peer-checked:visible">
            <path d="M4 7l2 4 4-8" fill="none" stroke="#000" strokeWidth="2" />
          </Svg>
        </span>
      </span>
    );
  if (name === "font") return <span className="flex items-center gap-[9px] pl-[2px]"><span>A</span>{value}</span>;
  if (name === "cursor")
    return (
      <span className="flex items-center gap-[8px]">
        <Svg s={16} box={16}><path d="M5 1v12l3-3 2 5 2-1-2-5h4z" fill="#fff" stroke="#444" /></Svg>
        {value}
      </span>
    );
  if (name === "windowIcon") return <span className="flex h-[22px] items-center"><QtLogo s={15} /></span>;
  return value;
}

function PropertyEditor() {
  return (
    <section className="mt-[6px] flex min-h-0 flex-1 flex-col">
      <PanelTitle>Property Editor</PanelTitle>
      <div className="mt-[6px] flex items-center pl-1">
        <input aria-label="Filter properties" placeholder="Filter" className="h-[27px] min-w-0 flex-1 rounded-xs border border-[#a9a6a1] bg-white px-[2px] placeholder:text-[#8b8b8b]" />
        <button aria-label="Add" className="ml-[5px] flex items-end">
          <Svg s={24} box={24}><path d="M9 1h5v8h8v5h-8v8H9v-8H1V9h8z" fill="#2fe02f" stroke="#119a11" strokeWidth="1.200" /><path d="M10 2h2v9H2v-1h8z" fill="#b5ffb5" /></Svg>
          <span className="-ml-[6px]"><Svg s={6} box={10}><path d="M0 3h10L5 8z" fill="#444" /></Svg></span>
        </button>
        <button aria-label="Remove" className="ml-[7px]">
          <Svg s={24} box={24}><rect x="2" y="9" width="21" height="5" fill="#d5d3d0" stroke="#a9a7a3" /></Svg>
        </button>
        <button aria-label="Configure" className="mr-[7px] ml-[10px] flex items-end">
          <Svg s={24} box={24}>
            <path d="M1 22l12-13c-1-4 1-7 5-8l-1 4 2 2 4-2c1 4-2 7-6 7L4 23z" fill="#c9c9c9" stroke="#777" />
            <path d="M3 21l9-10" stroke="#333" strokeWidth="1.500" />
          </Svg>
          <span className="-ml-[5px]"><Svg s={6} box={10}><path d="M0 3h10L5 8z" fill="#444" /></Svg></span>
        </button>
      </div>
      <div className="mt-[6px] h-6 border border-[#b4b1ac] bg-[#f1eeeb] pl-[2px] leading-[22px]">GUI_FMA : QWidget</div>
      <div className="mt-px flex min-h-0 flex-1 border border-[#b4b1ac] bg-white">
        <div className="min-w-0 flex-1 overflow-hidden">
          <table className="w-full table-fixed border-separate border-spacing-0 whitespace-nowrap">
            <thead>
              <tr className="h-6">
                <th className={`${HEAD} w-[182px] border-r`}>Property</th>
                <th className={HEAD}>Value</th>
              </tr>
            </thead>
            <tbody>
              {PROPS.map(([name, value, f = ""], i) =>
                value === null ? (
                  <tr key={name} className="h-[23px] bg-[#9e9c98] font-bold text-white">
                    <td colSpan={2} className="border-b border-[#b9b7b4] p-0 pl-1 leading-[22px]">
                      <span className="flex items-center gap-[9px]"><Triangle />{name}</span>
                    </td>
                  </tr>
                ) : (
                  <tr key={name} className={`h-[23px] ${i === 1 ? "bg-[#fff0de]" : i % 2 ? "bg-[#ffffdc]" : "bg-[#ffffbf]"}`}>
                    <td className={`border-r border-b border-[#bfbdba] p-0 leading-[22px] ${f.includes("b") ? "font-bold" : ""}`}>
                      <span className={`flex items-center gap-[9px] ${f.includes("+") || f === "-" ? "pl-1" : f === "i" ? "pl-[43px]" : "pl-[23px]"}`}>
                        {(f.includes("+") || f === "-") && <Triangle dir={f === "-" ? "down" : "right"} />}
                        {name}
                      </span>
                    </td>
                    <td className="border-b border-[#bfbdba] p-0 pl-[3px] leading-[22px]"><Value name={name} value={value} /></td>
                  </tr>
                )
              )}
            </tbody>
          </table>
        </div>
        <ScrollBar thumb="h-[350px]" />
      </div>
    </section>
  );
}

/* ---------- page ---------- */

export default function App() {
  return (
    <div className={`flex h-screen flex-col overflow-hidden bg-[#efebe7] text-[16px] leading-[19px] text-black ${UI}`}>
      <TopBar />
      <div className="flex min-h-0 flex-1">
        <Dock />
        <main className="flex min-w-0 flex-1 flex-col">
          <TitleBar />
          <MenuBar />
          <ToolBar />
          <div className="flex min-h-0 flex-1">
            <WidgetBox />
            <div className="flex w-[6px] items-center justify-center"><span className="h-4 w-px bg-[radial-gradient(circle_at_0_0,#a9a7a2_1px,transparent_1px)] bg-[size:3px_3px]" /></div>
            <div className="min-w-0 flex-1 border-r border-[#b4b1ac] bg-[#9e9d98] p-px">
              <FormWindow />
            </div>
            <div className="w-[6px]" />
            <aside className="flex w-[353px] shrink-0 flex-col pt-px">
              <ObjectInspector />
              <PropertyEditor />
            </aside>
          </div>
          <footer className="h-6 shrink-0" />
        </main>
      </div>
    </div>
  );
}
